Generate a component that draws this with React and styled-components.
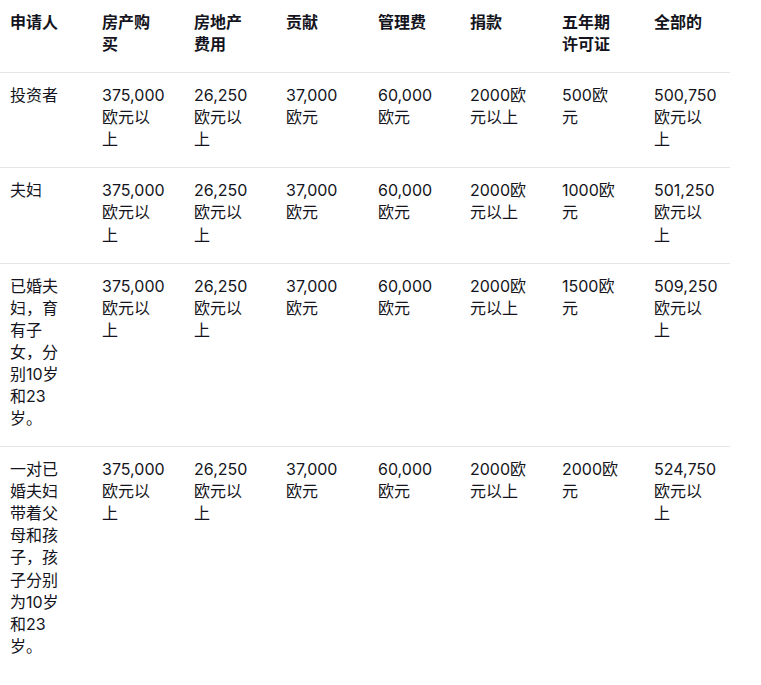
import styled, { createGlobalStyle } from "styled-components";

const GlobalStyle = createGlobalStyle`
  body {
    margin: 0;
    background: #ffffff;
    font-family: "Inter", "Noto Sans CJK SC", sans-serif;
    color: #141420;
  }
`;

// Styled components
const Table = styled.table`
  width: 730px;
  border-collapse: collapse;
  table-layout: fixed;
  font-size: 16px;
  line-height: 1.38;
`;

const Col = styled.col`
  width: ${(p) => p.$w || 92}px;
`;

const Row = styled.tr`
  border-bottom: ${(p) => (p.$last ? "none" : "1px solid #e6e6e6")};
`;

const HeadCell = styled.th`
  text-align: left;
  vertical-align: top;
  font-weight: 700;
  padding: 11px 21px 17px 10px;
`;

const Cell = styled.td`
  vertical-align: top;
  font-weight: 400;
  padding: 11px 21px 17px 10px;
`;

const headers = [
  "申请人",
  "房产购买",
  "房地产费用",
  "贡献",
  "管理费",
  "捐款",
  "五年期许可证",
  "全部的",
];

const rows = [
  ["投资者", "375,000欧元以上", "26,250欧元以上", "37,000欧元", "60,000欧元", "2000欧元以上", "500欧元", "500,750欧元以上"],
  ["夫妇", "375,000欧元以上", "26,250欧元以上", "37,000欧元", "60,000欧元", "2000欧元以上", "1000欧元", "501,250欧元以上"],
  ["已婚夫妇，育有子女，分别10岁和23岁。", "375,000欧元以上", "26,250欧元以上", "37,000欧元", "60,000欧元", "2000欧元以上", "1500欧元", "509,250欧元以上"],
  ["一对已婚夫妇带着父母和孩子，孩子分别为10岁和23岁。", "375,000欧元以上", "26,250欧元以上", "37,000欧元", "60,000欧元", "2000欧元以上", "2000欧元", "524,750欧元以上"],
];

const App = () => {
  return (
    <>
      <GlobalStyle />
      <Table>
        <colgroup>
          {headers.map((h, i) => (
            <Col key={h} $w={i === headers.length - 1 ? 86 : 92} />
          ))}
        </colgroup>
        <thead>
          <Row>
            {headers.map((h) => (
              <HeadCell key={h}>{h}</HeadCell>
            ))}
          </Row>
        </thead>
        <tbody>
          {rows.map((r, i) => (
            <Row key={i} $last={i === rows.length - 1}>
              {r.map((c, j) => (
                <Cell key={j}>{c}</Cell>
              ))}
            </Row>
          ))}
        </tbody>
      </Table>
    </>
  );
};

export default App;
